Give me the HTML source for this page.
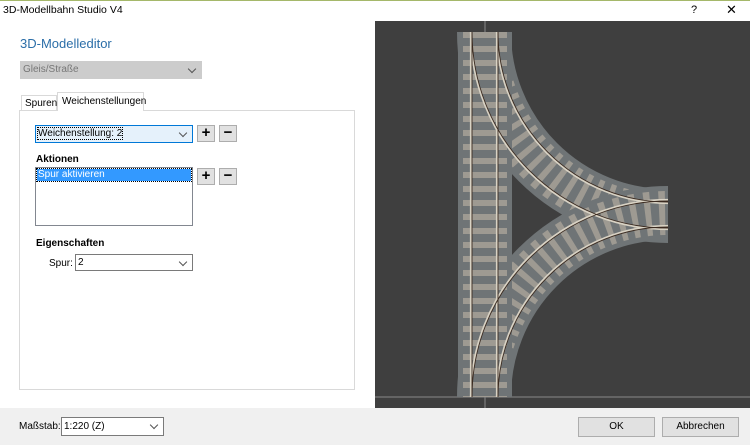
<!DOCTYPE html>
<html><head><style>
*{box-sizing:border-box;margin:0;padding:0}
body{width:750px;height:445px;overflow:hidden;background:#fff;font-family:"Liberation Sans",sans-serif;font-size:10px;color:#000;position:relative}
.a{position:absolute;white-space:nowrap}
.combo{position:absolute;border:1px solid #7a7a7a;background:#fff;height:17px;padding:2px 2px;font-size:10px;white-space:nowrap}
.combo::after{content:"";position:absolute;right:6px;top:4px;width:5px;height:5px;border-right:1px solid #555;border-bottom:1px solid #555;transform:rotate(45deg)}
.btn{position:absolute;width:18px;height:17px;background:#e1e1e1;border:1px solid #adadad;font-size:15px;font-weight:bold;text-align:center;line-height:14px}
</style></head><body>
<div class="a" style="left:0;top:0;width:750px;height:1px;background:#a5b86a"></div>
<div class="a" style="left:3px;top:4px;font-size:10.5px">3D-Modellbahn Studio V4</div>
<div class="a" style="left:691px;top:4px;font-size:11px">?</div>
<div class="a" style="left:726px;top:2px;font-size:13px">✕</div>
<div class="a" style="left:20px;top:36px;font-size:13px;color:#2b6ea8">3D-Modelleditor</div>
<div class="combo" style="left:20px;top:61px;width:182px;height:18px;background:#ccc;border-color:#ccc;color:#777">Gleis/Straße</div>
<div class="a" style="left:21px;top:95px;width:36px;height:16px;border:1px solid #d9d9d9;border-bottom:none;padding:2px 3px;background:#fff">Spuren</div>
<div class="a" style="left:57px;top:92px;width:87px;height:19px;border:1px solid #d9d9d9;border-bottom:none;padding:3px 4px;background:#fff;z-index:2">Weichenstellungen</div>
<div class="a" style="left:19px;top:110px;width:336px;height:280px;border:1px solid #d9d9d9"></div>
<div class="combo" style="left:35px;top:125px;width:158px;height:18px;background:#e5f1fb;border-color:#0078d7"><span style="outline:1px dotted #000">Weichenstellung: 2</span></div>
<div class="btn" style="left:197px;top:125px">+</div>
<div class="btn" style="left:219px;top:125px">−</div>
<div class="a" style="left:36px;top:154px;font-weight:bold">Aktionen</div>
<div class="a" style="left:35px;top:167px;width:158px;height:59px;border:1px solid #828790"><div style="background:#3399ff;color:#fff;height:12px;line-height:12px;padding-left:1px;margin:1px;outline:1px dotted #000">Spur aktivieren</div></div>
<div class="btn" style="left:197px;top:168px">+</div>
<div class="btn" style="left:219px;top:168px">−</div>
<div class="a" style="left:36px;top:238px;font-weight:bold">Eigenschaften</div>
<div class="a" style="left:49px;top:258px">Spur:</div>
<div class="combo" style="left:75px;top:254px;width:118px;height:17px">2</div>
<div class="a" style="left:0;top:408px;width:750px;height:37px;background:#f0f0f0"></div>
<div class="a" style="left:19px;top:421px">Maßstab:</div>
<div class="combo" style="left:61px;top:417px;width:103px;height:19px;padding-top:3px">1:220 (Z)</div>
<div class="a" style="left:578px;top:417px;width:77px;height:20px;background:#e1e1e1;border:1px solid #adadad;text-align:center;line-height:18px">OK</div>
<div class="a" style="left:662px;top:417px;width:77px;height:20px;background:#e1e1e1;border:1px solid #adadad;text-align:center;line-height:18px">Abbrechen</div>
<svg class="a" style="left:375px;top:21px" width="375" height="387" viewBox="375 21 375 387">
<rect x="375" y="21" width="375" height="387" fill="#3f3f3f"/>
<line x1="485" y1="21" x2="485" y2="408" stroke="#888"/>
<line x1="375" y1="397" x2="750" y2="397" stroke="#888"/>
<g fill="none">
<path d="M484 32 A184 184 0 0 0 668 216" stroke="#6f7476" stroke-width="54"/>
<path d="M484 32 A184 184 0 0 0 668 216" stroke="#9e9a92" stroke-width="44" stroke-dasharray="6 8"/>
<path d="M484 397 A184 184 0 0 1 668 213" stroke="#6f7476" stroke-width="54"/>
<path d="M484 397 A184 184 0 0 1 668 213" stroke="#9e9a92" stroke-width="44" stroke-dasharray="6 8"/>
<line x1="485" y1="32" x2="485" y2="397" stroke="#6f7476" stroke-width="54"/>
<line x1="485" y1="32" x2="485" y2="397" stroke="#9e9a92" stroke-width="44" stroke-dasharray="6 8"/>
<g stroke="#d8d2c4" stroke-width="2.2">
<line x1="471" y1="32" x2="471" y2="397"/><line x1="497" y1="32" x2="497" y2="397"/>
<path d="M471 32 A197 197 0 0 0 668 229"/><path d="M497 32 A171 171 0 0 0 668 203"/>
<path d="M471 397 A197 197 0 0 1 668 200"/><path d="M497 397 A171 171 0 0 1 668 226"/>
</g>
<g stroke="#3a2a20" stroke-width="0.9">
<line x1="472" y1="32" x2="472" y2="397"/><line x1="498" y1="32" x2="498" y2="397"/>
<path d="M472 32 A196 196 0 0 0 668 228"/><path d="M498 32 A170 170 0 0 0 668 202"/>
<path d="M472 397 A196 196 0 0 1 668 201"/><path d="M498 397 A170 170 0 0 1 668 227"/>
</g>
</g>
</svg>
</body></html>
